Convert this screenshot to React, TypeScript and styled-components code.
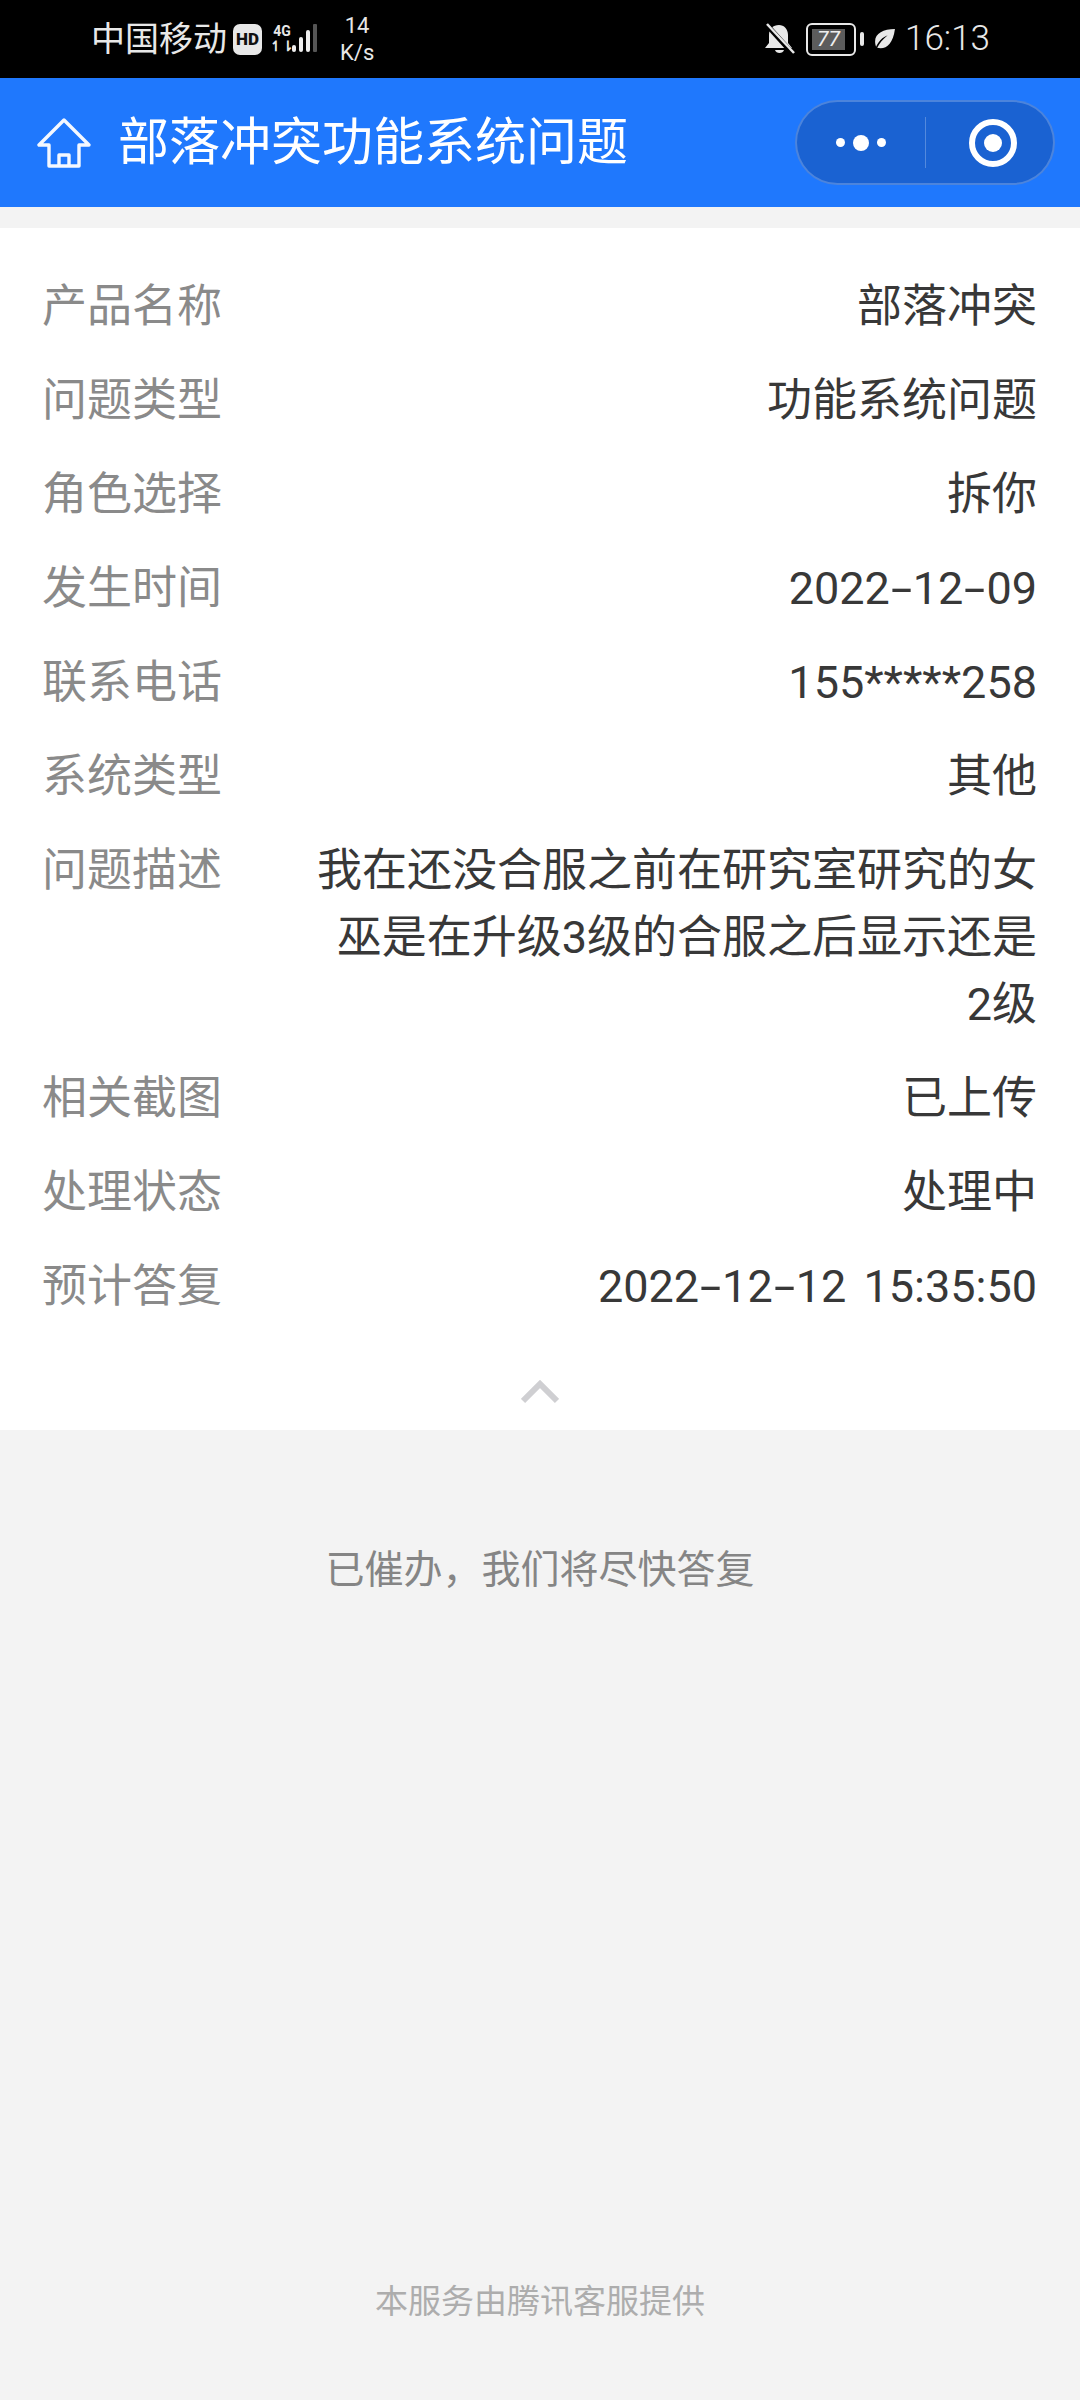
import React from 'react';
import styled, { createGlobalStyle } from 'styled-components';

const GlobalStyle = createGlobalStyle`
  html, body {
    margin: 0;
    padding: 0;
    background: #f3f3f3;
    font-family: Roboto, "Noto Sans CJK SC", sans-serif;
  }
  * { box-sizing: border-box; }
`;

const rows = [
  ['产品名称', '部落冲突'],
  ['问题类型', '功能系统问题'],
  ['角色选择', '拆你'],
  ['发生时间', '2022-12-09'],
  ['联系电话', '155*****258'],
  ['系统类型', '其他'],
  ['问题描述', '我在还没合服之前在研究室研究的女巫是在升级3级的合服之后显示还是2级'],
  ['相关截图', '已上传'],
  ['处理状态', '处理中'],
  ['预计答复', '2022-12-12 15:35:50'],
];

// the hyphen in dates is drawn much wider in the original font
const renderValue = (value: string) =>
  value.split('-').map((part, i) => (
    <React.Fragment key={i}>
      {i > 0 && <Dash>-</Dash>}
      {part}
    </React.Fragment>
  ));

const App: React.FC = () => (
  <Page>
    <GlobalStyle />
    <StatusBar>
      <StatusLeft>
        <Carrier>中国移动</Carrier>
        <HdBadge>HD</HdBadge>
        <Signal>
          <NetLabel>
            <span>4G</span>
            <span>↿⇂</span>
          </NetLabel>
          <SignalBars viewBox="0 0 30 32" width="30" height="32">
            <rect x="0" y="22" width="4" height="7" rx="2" fill="#eee" />
            <rect x="7" y="14" width="4" height="15" rx="2" fill="#eee" />
            <rect x="14" y="7" width="4" height="22" rx="2" fill="#eee" />
            <rect x="21" y="1" width="4" height="28" rx="1" fill="#555" />
          </SignalBars>
        </Signal>
        <Speed>
          <span>14</span>
          <span>K/s</span>
        </Speed>
      </StatusLeft>
      <StatusRight>
        <svg width="31" height="32" viewBox="0 0 31 32">
          <path d="M15 2C9 2 5 6 5 12v8l-4 5h27l-4-5v-8c0-6-4-10-9-10z" fill="#e8e8e8" />
          <path d="M11 27c1 4 8 4 9 0z" fill="#e8e8e8" />
          <path d="M2 1l27 30" stroke="#000" strokeWidth="5" />
          <path d="M3 1l27 29" stroke="#e8e8e8" strokeWidth="2.5" />
        </svg>
        <Battery>
          <BatteryBody>
            <BatteryFill>77</BatteryFill>
          </BatteryBody>
          <BatteryCap />
        </Battery>
        <svg width="23" height="23" viewBox="0 0 22 22">
          <path d="M21 1C10 1 2 5 2 13c0 2 .5 4 1 5 0 0 3-8 11-11-5 4-8 8-10 12 8 2 15-3 17-18z" fill="#e8e8e8" />
        </svg>
        <Clock>16:13</Clock>
      </StatusRight>
    </StatusBar>

    <NavBar>
      <NavLeft>
        <svg width="54" height="52" viewBox="0 0 54 52" fill="none" stroke="#f4f8ff" strokeWidth="3.4" strokeLinejoin="round">
          <path d="M27 3L2 28h10v21h30V28h10z" />
          <path d="M22 49V38h10v11" />
        </svg>
        <NavTitle>部落冲突功能系统问题</NavTitle>
      </NavLeft>
      <Capsule>
        <MoreDots>
          <Dot $size={9} />
          <Dot $size={16} />
          <Dot $size={9} />
        </MoreDots>
        <CapsuleDivider />
        <TargetSlot>
          <Target />
        </TargetSlot>
      </Capsule>
    </NavBar>

    <InfoCard>
      <InfoList>
        {rows.map(([label, value]) => (
          <InfoRow key={label}>
            <RowLabel>{label}</RowLabel>
            <RowValue>{renderValue(value)}</RowValue>
          </InfoRow>
        ))}
      </InfoList>
      <Collapse>
        <svg width="38" height="24" viewBox="0 0 38 24" fill="none">
          <path d="M2 21L19 4l17 17" stroke="#cfcfd2" strokeWidth="6" />
        </svg>
      </Collapse>
    </InfoCard>

    <Notice>已催办，我们将尽快答复</Notice>
    <Footer>本服务由腾讯客服提供</Footer>
  </Page>
);

const Page = styled.div`
  width: 1080px;
  height: 2400px;
  background: #f3f3f3;
  display: flex;
  flex-direction: column;
  overflow: hidden;
`;

const StatusBar = styled.div`
  height: 78px;
  background: #000;
  color: #e8e8e8;
  display: flex;
  align-items: center;
  justify-content: space-between;
  padding: 0 90px 0 91px;
`;

const StatusLeft = styled.div`
  display: flex;
  align-items: center;
`;

const Carrier = styled.span`
  font-size: 34px;
  line-height: 40px;
`;

const HdBadge = styled.span`
  width: 29px;
  height: 31px;
  margin-left: 6px;
  border-radius: 7px;
  background: #e8e8e8;
  color: #111;
  font-size: 17px;
  font-weight: 900;
  display: flex;
  align-items: center;
  justify-content: center;
`;

const Signal = styled.div`
  display: flex;
  align-items: center;
  margin-left: 11px;
  gap: 1px;
`;

const NetLabel = styled.div`
  display: flex;
  flex-direction: column;
  align-items: center;
  font-size: 14px;
  line-height: 15px;
  font-weight: 700;
  width: 18px;
`;

const SignalBars = styled.svg`
  display: block;
`;

const Speed = styled.div`
  display: flex;
  flex-direction: column;
  align-items: center;
  margin-left: 18px;
  font-size: 22px;
  line-height: 27px;
`;

const StatusRight = styled.div`
  display: flex;
  align-items: center;
  gap: 9px;
`;

const Battery = styled.div`
  display: flex;
  align-items: center;
  gap: 4px;
  margin-left: 2px;
`;

const BatteryBody = styled.div`
  width: 50px;
  height: 33px;
  border: 2px solid #e8e8e8;
  border-radius: 6px;
  padding: 4px;
  display: flex;
`;

const BatteryFill = styled.div`
  width: 33px;
  background: #5c5c5c;
  color: #eee;
  font-size: 21px;
  font-style: italic;
  line-height: 21px;
  text-align: center;
`;

const BatteryCap = styled.div`
  width: 4px;
  height: 14px;
  border-radius: 2px;
  background: #e8e8e8;
`;

const Clock = styled.span`
  font-size: 35px;
  line-height: 40px;
  font-weight: 300;
`;

const NavBar = styled.div`
  height: 129px;
  background: #1f78fd;
  display: flex;
  align-items: center;
  justify-content: space-between;
  padding: 0 25px 0 37px;
`;

const NavLeft = styled.div`
  display: flex;
  align-items: center;
  gap: 27px;
`;

const NavTitle = styled.h1`
  margin: 0;
  color: #fff;
  font-size: 51px;
  line-height: 70px;
  font-weight: 400;
`;

const Capsule = styled.div`
  width: 260px;
  height: 85px;
  border-radius: 43px;
  background: #1a62d2;
  border: 2px solid rgba(255, 255, 255, 0.22);
  display: flex;
  align-items: center;
`;

const MoreDots = styled.div`
  width: 128px;
  display: flex;
  align-items: center;
  justify-content: center;
  gap: 8px;
`;

const Dot = styled.span<{ $size: number }>`
  width: ${({ $size }) => $size}px;
  height: ${({ $size }) => $size}px;
  border-radius: 50%;
  background: #fff;
`;

const CapsuleDivider = styled.div`
  width: 1px;
  height: 51px;
  background: rgba(255, 255, 255, 0.25);
`;

const TargetSlot = styled.div`
  flex: 1;
  display: flex;
  justify-content: center;
  padding-left: 6px;
`;

const Target = styled.div`
  width: 48px;
  height: 48px;
  border-radius: 50%;
  border: 6px solid #fff;
  display: flex;
  align-items: center;
  justify-content: center;

  &::after {
    content: '';
    width: 18px;
    height: 18px;
    border-radius: 50%;
    background: #fff;
  }
`;

const InfoCard = styled.section`
  margin-top: 21px;
  height: 1202px;
  background: #fff;
  display: flex;
  flex-direction: column;
`;

const InfoList = styled.div`
  padding: 45px 43px 0 42px;
  display: flex;
  flex-direction: column;
  gap: 27px;
`;

const InfoRow = styled.div`
  display: flex;
  justify-content: space-between;
  font-size: 45px;
  line-height: 67px;
`;

const RowLabel = styled.span`
  flex: none;
  width: 273px;
  color: #8a8a8a;
`;

const RowValue = styled.span`
  flex: 1;
  text-align: right;
  color: #383838;
  word-spacing: 6px;
`;

const Dash = styled.span`
  display: inline-block;
  width: 23px;
  text-align: center;
  transform: scaleX(1.7);
`;

const Collapse = styled.div`
  margin-top: 60px;
  display: flex;
  justify-content: center;

  svg {
    display: block;
  }
`;

const Notice = styled.div`
  margin-top: 115px;
  text-align: center;
  font-size: 39px;
  line-height: 50px;
  color: #858585;
`;

const Footer = styled.div`
  margin-top: 685px;
  text-align: center;
  font-size: 33px;
  line-height: 44px;
  color: #adadad;
`;

export default App;
